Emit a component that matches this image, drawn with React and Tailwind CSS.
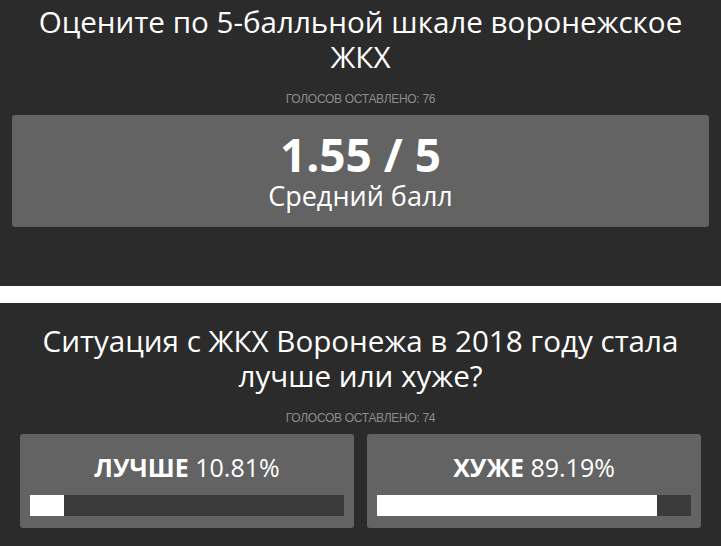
import React from 'react';

const polls = {
    rating: { title: 'Оцените по 5-балльной шкале воронежское ЖКХ', votes: 76, score: '1.55 / 5' },
    trend: {
        title: 'Ситуация с ЖКХ Воронежа в 2018 году стала лучше или хуже?',
        votes: 74,
        options: [
            { label: 'ЛУЧШЕ', pct: 10.81 },
            { label: 'ХУЖЕ', pct: 89.19 }
        ]
    }
};

const Title = ({ children }) => (
    <h2 className="text-[29.6px] leading-[35px] text-white text-center px-8">{children}</h2>
);

const Votes = ({ count }) => (
    <div className="mt-[17px] text-center text-[12px] leading-4 text-[#8c8c8c] uppercase tracking-[-0.3px]" style={{ fontFamily: '"Liberation Sans", Arial, sans-serif' }}>
        Голосов оставлено: {count}
    </div>
);

const OptionCard = ({ label, pct }) => (
    <div className="bg-[#636363] rounded-[3px] px-[10px] pt-[18px] pb-3">
        <div className="text-center text-[25px] leading-[30px] text-white">
            <span className="font-bold">{label}</span> {pct.toFixed(2)}%
        </div>
        <div className="mt-[13px] h-[21px] bg-[#3b3b3b]">
            <div className="h-full bg-white" style={{ width: `${pct}%` }} />
        </div>
    </div>
);

export default function App() {
    const { rating, trend } = polls;

    return (
        <div className="w-[721px] h-[546px] bg-white flex flex-col" style={{ fontFamily: '"Open Sans", "Noto Sans", sans-serif' }}>
            <section className="h-[286px] bg-[#2b2b2b] pt-1">
                <Title>{rating.title}</Title>
                <Votes count={rating.votes} />
                <div className="mt-2 mx-3 bg-[#636363] rounded-[3px] pt-4 pb-4 text-center text-white">
                    <div className="text-[46px] leading-[46px] font-bold">{rating.score}</div>
                    <div className="mt-[4px] text-[27px] leading-[30px]">Средний балл</div>
                </div>
            </section>

            <section className="mt-[17px] flex-1 bg-[#2b2b2b] pt-5">
                <Title>{trend.title}</Title>
                <Votes count={trend.votes} />
                <div className="mt-2 px-5 grid grid-cols-2 gap-[13px]">
                    {trend.options.map(o => (
                        <OptionCard key={o.label} {...o} />
                    ))}
                </div>
            </section>
        </div>
    );
}
